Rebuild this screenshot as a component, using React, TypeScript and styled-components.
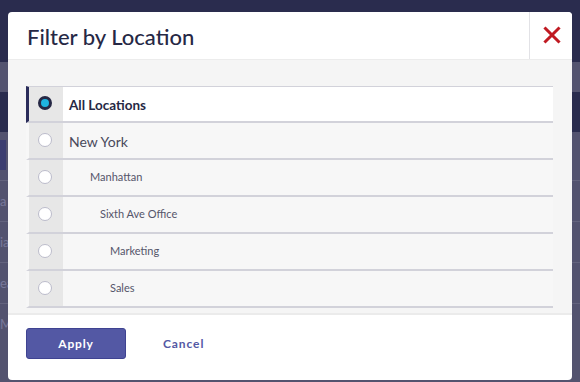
import styled, { createGlobalStyle } from "styled-components";

const GlobalStyle = createGlobalStyle`
  html, body {
    margin: 0;
    padding: 0;
    width: 580px;
    height: 382px;
    overflow: hidden;
    font-family: Lato, "Open Sans", sans-serif;
  }
`;

interface Location {
  name: string;
  depth: number;
}

const locations: Location[] = [
  { name: "All Locations", depth: 0 },
  { name: "New York", depth: 0 },
  { name: "Manhattan", depth: 1 },
  { name: "Sixth Ave Office", depth: 2 },
  { name: "Marketing", depth: 3 },
  { name: "Sales", depth: 3 },
];

function App() {
  const selected = 0;

  return (
    <Page>
      <GlobalStyle />
      <TopBar />
      <SubBar />
      <NavBar />
      <Content>
        <ActiveTab />
        <BgRow>a</BgRow>
        <BgRow>ia</BgRow>
        <BgRow>ea</BgRow>
        <BgRow>M</BgRow>
      </Content>

      <Modal>
        <Header>
          <Title>Filter by Location</Title>
          <CloseButton aria-label="close">
            <svg width="18" height="18" viewBox="0 0 18 18">
              <path
                d="M2.5 2.5 L15.5 15.5 M15.5 2.5 L2.5 15.5"
                stroke="#c01a22"
                strokeWidth="3"
                strokeLinecap="square"
              />
            </svg>
          </CloseButton>
        </Header>
        <Body>
          <List>
            {locations.map((loc, i) => (
              <Row key={loc.name} $active={i === selected}>
                <RadioCell>
                  <Radio $checked={i === selected} />
                </RadioCell>
                <Label $depth={loc.depth} $active={i === selected} $top={i < 2}>
                  {loc.name}
                </Label>
              </Row>
            ))}
          </List>
        </Body>
        <Footer>
          <ApplyButton>Apply</ApplyButton>
          <CancelButton>Cancel</CancelButton>
        </Footer>
      </Modal>
    </Page>
  );
}

const Page = styled.div`
  position: relative;
  width: 580px;
  height: 382px;
  background: #53536f;
  display: flex;
  flex-direction: column;
`;

const TopBar = styled.div`
  height: 62px;
  background: #2a2c4e;
`;

const SubBar = styled.div`
  height: 30px;
  background: #545470;
`;

const NavBar = styled.div`
  height: 40px;
  background: #2a2c4e;
`;

const Content = styled.div`
  display: flex;
  flex-direction: column;
  padding-top: 8px;
`;

const ActiveTab = styled.div`
  width: 6px;
  height: 30px;
  background: #3b3d70;
  margin-bottom: 10px;
`;

const BgRow = styled.div`
  height: 40px;
  border-top: 1px solid #64647e;
  color: #78789a;
  font-size: 13px;
  line-height: 40px;
`;

const Modal = styled.div`
  position: absolute;
  left: 8px;
  top: 12px;
  width: 564px;
  height: 368px;
  background: #ffffff;
  border-radius: 4px;
  overflow: hidden;
  display: flex;
  flex-direction: column;
`;

const Header = styled.div`
  height: 48px;
  display: flex;
  align-items: stretch;
  border-bottom: 1px solid #ececec;
  box-sizing: border-box;
`;

const Title = styled.h2`
  flex: 1;
  margin: 0;
  padding-left: 19px;
  font-size: 22px;
  font-weight: 500;
  color: #262845;
  line-height: 49px;
`;

const CloseButton = styled.button`
  width: 43px;
  border: none;
  border-left: 1px solid #e2e2e6;
  background: #ffffff;
  display: flex;
  align-items: center;
  justify-content: center;
  padding: 0 0 2px 2px;
  cursor: pointer;
`;

const Body = styled.div`
  flex: 1;
  background: #f5f5f5;
  padding: 27px 19px 0 18px;
  border-bottom: 2px solid #ebebeb;
`;

const List = styled.div`
  display: flex;
  flex-direction: column;
`;

const Row = styled.div<{ $active: boolean }>`
  display: flex;
  height: 37px;
  box-sizing: border-box;
  border-bottom: 2px solid #d2d2da;
  background: ${(p) => (p.$active ? "#ffffff" : "#f7f7f7")};
  border-left: 3px solid ${(p) => (p.$active ? "#2a2c5a" : "transparent")};
  border-top: ${(p) => (p.$active ? "1px solid #d2d2da" : "none")};
  margin-top: ${(p) => (p.$active ? "-1px" : "0")};
`;

const RadioCell = styled.div`
  width: 34px;
  background: #e7e7e7;
  display: flex;
  align-items: center;
  justify-content: center;
  padding: 0 2px 2px 0;
  box-sizing: border-box;
`;

const Radio = styled.span<{ $checked: boolean }>`
  width: 14px;
  height: 14px;
  border-radius: 50%;
  box-sizing: border-box;
  background: ${(p) => (p.$checked ? "#1eb3e0" : "#ffffff")};
  border: ${(p) => (p.$checked ? "3px solid #262845" : "1px solid #bcbccb")};
`;

const Label = styled.div<{ $depth: number; $active: boolean; $top: boolean }>`
  display: flex;
  align-items: center;
  padding-left: ${(p) => 6 + (p.$depth === 0 ? 0 : 11 + p.$depth * 10)}px;
  padding-top: ${(p) => (p.$top ? "1px" : "0")};
  padding-bottom: ${(p) => (p.$top ? "0" : "2px")};
  font-size: ${(p) => (p.$top ? "13.5px" : "11px")};
  font-weight: ${(p) => (p.$active ? 700 : 400)};
  color: ${(p) => (p.$active ? "#262845" : "#55556a")};
  ${(p) => p.$top && !p.$active && "font-size: 14px; color: #4a4a5c;"}
`;

const Footer = styled.div`
  height: 65px;
  display: flex;
  align-items: flex-start;
  padding: 13px 18px 0;
  box-sizing: border-box;
  gap: 37px;
`;

const ApplyButton = styled.button`
  width: 100px;
  height: 31px;
  background: #5358a4;
  border: 1px solid #3f4391;
  border-radius: 3px;
  color: #ffffff;
  font-family: Lato, sans-serif;
  font-weight: 700;
  font-size: 12px;
  letter-spacing: 0.8px;
  cursor: pointer;
`;

const CancelButton = styled.button`
  height: 31px;
  background: none;
  border: none;
  padding: 0;
  color: #5358a4;
  font-family: Lato, sans-serif;
  font-weight: 700;
  font-size: 12px;
  letter-spacing: 0.9px;
  cursor: pointer;
`;

export default App;
